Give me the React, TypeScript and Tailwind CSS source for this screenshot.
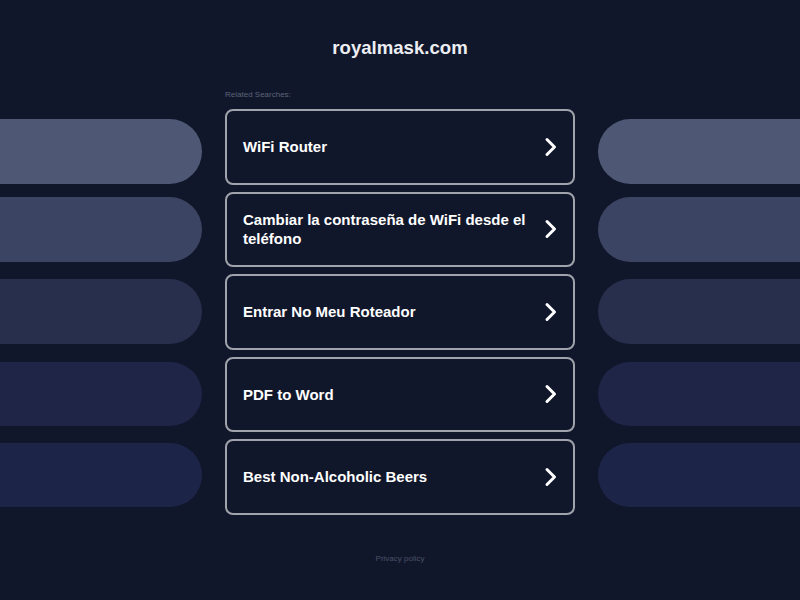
const searches = [
  "WiFi Router",
  "Cambiar la contraseña de WiFi desde el teléfono",
  "Entrar No Meu Roteador",
  "PDF to Word",
  "Best Non-Alcoholic Beers",
];

// decorative side pills: shade + spacing above each one
const pills = [
  { shade: "bg-[#4e5774]", gap: "mt-[29px]" },
  { shade: "bg-[#3b4462]", gap: "mt-[13.5px]" },
  { shade: "bg-[#272f4c]", gap: "mt-[17.5px]" },
  { shade: "bg-[#1e2546]", gap: "mt-[18px]" },
  { shade: "bg-[#1c2548]", gap: "mt-[16.5px]" },
];

function Chevron() {
  return (
    <svg width="14" height="20" viewBox="0 0 14 20" fill="none" className="shrink-0">
      <polyline points="3,2.5 10.5,10 3,17.5" stroke="white" strokeWidth="3" strokeLinecap="round" strokeLinejoin="round" />
    </svg>
  );
}

export default function App() {
  return (
    <div className="w-[800px] h-[600px] overflow-hidden bg-[#11172b] font-['Liberation_Sans',Arial,sans-serif] flex flex-col items-center">
      <h1 className="mt-[37px] text-[18.6px] leading-[22px] font-bold text-[#eceef2]">royalmask.com</h1>

      <div className="mt-[31px] w-full flex">
        {/* side pills left */}
        <div className="flex-1 flex flex-col pr-[23px]">
          {pills.map((p, i) => (
            <div key={i} className={`h-[64.5px] rounded-r-full ${p.shade} ${p.gap}`} />
          ))}
        </div>

        <div className="w-[350px] shrink-0">
          <p className="text-[8px] leading-[10px] text-[#5b6378] mb-[9px]">Related Searches:</p>
          <div className="flex flex-col gap-[7px]">
            {searches.map((s) => (
              <div
                key={s}
                className="h-[75.5px] rounded-[8px] border-2 border-[#a0a3ab] flex items-center justify-between pl-[16px] pr-[15px]"
              >
                <span className="text-white font-bold text-[15px] leading-[19px] pr-[12px]">{s}</span>
                <Chevron />
              </div>
            ))}
          </div>
        </div>

        {/* side pills right */}
        <div className="flex-1 flex flex-col pl-[23px]">
          {pills.map((p, i) => (
            <div key={i} className={`h-[64.5px] rounded-l-full ${p.shade} ${p.gap}`} />
          ))}
        </div>
      </div>

      <p className="mt-[39px] text-[8px] leading-[10px] text-[#4a5168]">Privacy policy</p>
    </div>
  );
}
